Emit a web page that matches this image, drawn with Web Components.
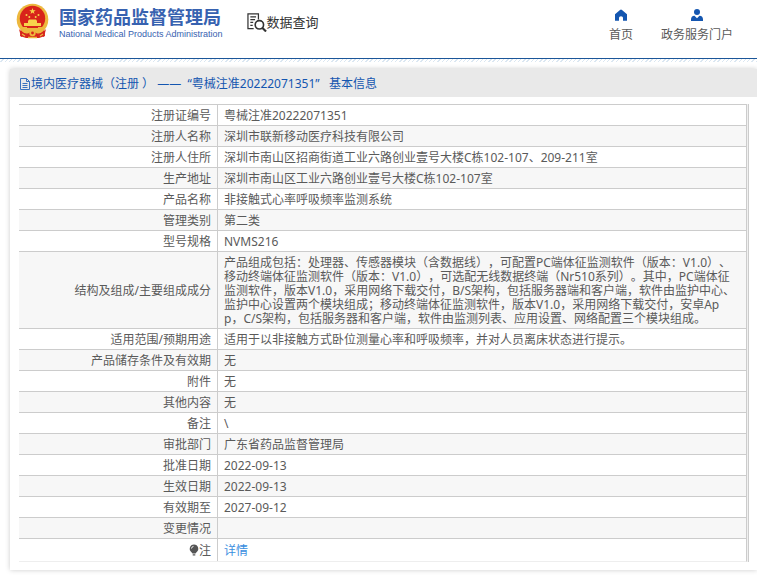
<!DOCTYPE html>
<html lang="zh-CN">
<head>
<meta charset="utf-8">
<title>国家药品监督管理局 - 数据查询</title>
<style>
  body {
    margin: 0;
    overflow-x: hidden;
    background: #fff;
    color: #5a5a5a;
    font: 12px/14px "Noto Sans", "Noto Sans CJK SC", sans-serif;
    text-spacing-trim: space-all;
  }
</style>
</head>
<body>
<nmpa-page></nmpa-page>

<template id="page-template">
  <style>
    :host { display: block; }
    main { padding: 7px 0 7px 10px; }
  </style>
  <site-header></site-header>
  <main>
    <info-panel>
      <span slot="title">境内医疗器械（注册 ） ——&nbsp; “粤械注准20222071351”&nbsp;&nbsp; 基本信息</span>
      <registration-table></registration-table>
    </info-panel>
  </main>
</template>

<template id="header-template">
  <style>
    :host { display: block; }
    header {
      display: flex;
      align-items: flex-start;
      height: 58px;
      box-sizing: border-box;
      padding: 3px 24px 0 16px;
    }
    .hatch {
      height: 4px;
      border-top: 1px solid #1b5699;
      box-sizing: border-box;
      background: repeating-linear-gradient(135deg, #fff 0 2px, #dbe7f2 2px 3px);
    }
    .query {
      display: flex;
      align-items: center;
      margin: 9px 0 0 24px;
      color: #333;
      font-size: 13px;
      line-height: 20px;
    }
    nav { display: flex; gap: 28px; margin: 5px 0 0 auto; }
  </style>
  <header>
    <agency-logo></agency-logo>
    <div class="query">
      <svg width="20" height="20" viewBox="0 0 21 21" fill="none" stroke="#333" stroke-width="1.3" aria-hidden="true">
        <path d="M7 17.500H1V2H12V8M3.500 5H9.500M3.500 8H8.500M3.500 11H6.500M3.500 14H6"/>
        <circle cx="13" cy="13.500" r="4.400" stroke-width="1.700"/>
        <path d="M16.200 16.800L20 20.400" stroke-width="2.300"/>
      </svg>
      <span>数据查询</span>
    </div>
    <nav>
      <nav-item>
        <svg slot="icon" width="14" height="14" viewBox="0 0 14 14" fill="#1456b0" aria-hidden="true"><path d="M7 1.500Q7.500 1.500 8 2L13 6.300V12.700H9V9.800Q9 8.200 7 8.200T5 9.800V12.700H1V6.300L6 2Q6.500 1.500 7 1.500Z"/></svg>首页</nav-item>
      <nav-item>
        <svg slot="icon" width="14" height="14" viewBox="0 0 14 14" fill="#1456b0" aria-hidden="true"><circle cx="7" cy="4" r="3"/><path d="M1 13V11.500Q1 8 4.500 7.800L7 10.200L9.500 7.800Q13 8 13 11.500V13Z"/></svg>政务服务门户</nav-item>
    </nav>
  </header>
  <div class="hatch"></div>
</template>

<template id="logo-template">
  <style>
    :host { display: flex; align-items: flex-start; gap: 10px; color: #3762b0; }
    .names { display: flex; flex-direction: column; white-space: nowrap; padding-top: 4px; }
    .cn { font-size: 18px; line-height: 20px; font-weight: 700; }
    .en { font-family: "Liberation Sans", sans-serif; font-size: 9px; line-height: 14px; }
  </style>
  <svg width="33" height="36" viewBox="0 0 33 36" aria-hidden="true">
    <path d="M5 24L4 33L10 35H23L29 33L28 24Z" fill="#d52b1e"/>
    <circle cx="16.500" cy="16.500" r="15.800" fill="#edb83e"/>
    <circle cx="16.500" cy="15.500" r="12.700" fill="#d8231b"/>
    <path d="M16.500 5L17.300 7.300H19.700L17.800 8.700L18.500 11L16.500 9.600L14.500 11L15.200 8.700L13.300 7.300H15.700Z" fill="#f8d34b"/>
    <g fill="#f8d34b"><circle cx="10.500" cy="12" r="1"/><circle cx="13.300" cy="14" r="1"/><circle cx="19.700" cy="14" r="1"/><circle cx="22.500" cy="12" r="1"/>
    <path d="M12 18L13 16.500H20L21 18V20H25V23H8V20H12Z"/></g>
    <path d="M5 24H28L25 28H8Z" fill="#edb83e"/>
    <path d="M11 24H22V25H11Z" fill="#d8231b"/>
    <path d="M3 26Q8 32 13 30L16.500 27L20 30Q25 32 30 26L28 34L23 31L21 35H12L10 31L5 34Z" fill="#d8231b"/>
    <circle cx="16.500" cy="30" r="3.200" fill="#edb83e"/><circle cx="16.500" cy="30" r="1.400" fill="#d8231b"/>
    <path d="M6 31L9 33M27 31L24 33M12 34.500H21" stroke="#edb83e" stroke-width="1.300"/>
  </svg>
  <div class="names">
    <span class="cn">国家药品监督管理局</span>
    <span class="en">National Medical Products Administration</span>
  </div>
</template>

<template id="nav-template">
  <style>
    :host { display: block; }
    a { display: flex; flex-direction: column; align-items: center; gap: 6px; color: inherit; text-decoration: none; white-space: nowrap; }
  </style>
  <a href="#"><slot name="icon"></slot><span><slot></slot></span></a>
</template>

<template id="panel-template">
  <style>
    :host { display: block; box-shadow: 0 0 5px #ccc; background: #fff; }
    h1 {
      display: flex;
      align-items: center;
      margin: 0;
      padding: 1px 10px 0;
      background: #e9e9e9;
      color: #1456b0;
      font: inherit;
      line-height: 27px;
      white-space: nowrap;
    }
    .body { padding: 7px 8px 8px 9px; }
  </style>
  <h1>
    <svg width="11" height="12" viewBox="0 0 11 12" fill="none" stroke="#3a72be" aria-hidden="true"><path d="M.5.5H6.500L9.500 3.500V11.500H.5ZM6.500.5V3.500H9.500M2.500 5.500H7.500M2.500 7.500H7.500M2.500 9.500H7.500"/></svg>
    <slot name="title"></slot>
  </h1>
  <div class="body"><slot></slot></div>
</template>

<template id="table-template">
  <style>
    :host { display: block; border-right: 1px solid #ccc; padding-right: 1px; background: #f0f0f0; }
    table { width: 100%; border-spacing: 0; table-layout: fixed; background: #fff; border-right: 1px solid #ccc; border-bottom: 1px solid #eee; }
    col.label { width: 199px; }
    th, td { padding: 4px 6px 2px; border-top: 1px solid #ccc; vertical-align: middle; }
    th { font-weight: 400; text-align: right; border-right: 1px solid #ccc; }
    td { height: 14px; text-align: left; word-break: break-all; white-space: pre-line; }
    tr:nth-child(even) { background: #f7f7f7; }
    tr:last-child > * { padding: 5px 6px 3px; }
    a { color: #3a8ee0; text-decoration: none; }
    svg { vertical-align: -1px; }
  </style>
  <table>
    <colgroup><col class="label"><col></colgroup>
    <tbody>
      <tr><th scope="row">注册证编号</th><td>粤械注准20222071351</td></tr>
      <tr><th scope="row">注册人名称</th><td>深圳市联新移动医疗科技有限公司</td></tr>
      <tr><th scope="row">注册人住所</th><td>深圳市南山区招商街道工业六路创业壹号大楼C栋102-107、209-211室</td></tr>
      <tr><th scope="row">生产地址</th><td>深圳市南山区工业六路创业壹号大楼C栋102-107室</td></tr>
      <tr><th scope="row">产品名称</th><td>非接触式心率呼吸频率监测系统</td></tr>
      <tr><th scope="row">管理类别</th><td>第二类</td></tr>
      <tr><th scope="row">型号规格</th><td>NVMS216</td></tr>
      <tr><th scope="row">结构及组成/主要组成成分</th><td>产品组成包括：处理器、传感器模块（含数据线），可配置PC端体征监测软件（版本：V1.0）、移动终端体征监测软件（版本：V1.0），可选配无线数据终端（Nr510系列）。其中，PC端体征监测软件，版本V1.0，采用网络下载交付，B/S架构，包括服务器端和客户端，软件由监护中心、监护中心设置两个模块组成；移动终端体征监测软件，版本V1.0，采用网络下载交付，安卓Ap
p，C/S架构，包括服务器和客户端，软件由监测列表、应用设置、网络配置三个模块组成。</td></tr>
      <tr><th scope="row">适用范围/预期用途</th><td>适用于以非接触方式卧位测量心率和呼吸频率，并对人员离床状态进行提示。</td></tr>
      <tr><th scope="row">产品储存条件及有效期</th><td>无</td></tr>
      <tr><th scope="row">附件</th><td>无</td></tr>
      <tr><th scope="row">其他内容</th><td>无</td></tr>
      <tr><th scope="row">备注</th><td>\</td></tr>
      <tr><th scope="row">审批部门</th><td>广东省药品监督管理局</td></tr>
      <tr><th scope="row">批准日期</th><td>2022-09-13</td></tr>
      <tr><th scope="row">生效日期</th><td>2022-09-13</td></tr>
      <tr><th scope="row">有效期至</th><td>2027-09-12</td></tr>
      <tr><th scope="row">变更情况</th><td></td></tr>
      <tr><th scope="row"><svg width="10" height="12" viewBox="0 0 10 12" aria-hidden="true"><path d="M5 .5A4.300 4.300 0 0 1 7.300 8.400L6.500 9.500H3.500L2.700 8.400A4.300 4.300 0 0 1 5 .5ZM3.700 10.200H6.300V11.500H3.700Z" fill="#555"/><path d="M2.500 4.500Q2.600 2.700 4.500 2.400" fill="none" stroke="#eee"/></svg>注</th><td><a href="#">详情</a></td></tr>
    </tbody>
  </table>
</template>

<script>
  const define = (name, templateId) => customElements.define(name, class extends HTMLElement {
    constructor() {
      super();
      this.attachShadow({ mode: 'open' })
        .append(document.getElementById(templateId).content.cloneNode(true));
    }
  });
  define('agency-logo', 'logo-template');
  define('nav-item', 'nav-template');
  define('site-header', 'header-template');
  define('registration-table', 'table-template');
  define('info-panel', 'panel-template');
  define('nmpa-page', 'page-template');
</script>
</body>
</html>
